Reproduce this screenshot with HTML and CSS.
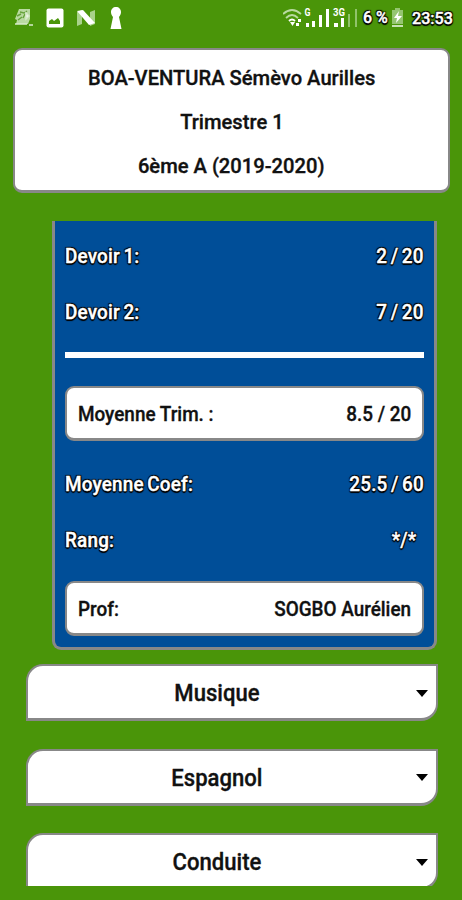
FILE: index.html
```html
<!DOCTYPE html>
<html lang="fr">
<head>
<meta charset="utf-8">
<title>Bulletin</title>
<link rel="stylesheet" href="styles.css">
</head>
<body>
<header class="status">
  <div class="notifications">
    <svg width="20" height="20" viewBox="0 0 20 20"><path d="M5 1h11v10l-2 5H2l1-4-2-1z" fill="#b9daa1"/><path d="M6 4l4 1 3-2M3 8l4-2M11 6l-2 4M4 12l4-3" stroke="#67a33b" fill="none" stroke-width="1.400"/><path d="M12 5l3 3-3 3zM1 16h12M15 17h4" fill="#fff" stroke="#d8ebca" stroke-width="1.500"/></svg>
    <svg width="18" height="20" viewBox="0 0 18 20"><rect x=".5" y=".5" width="17" height="19" rx="2" fill="#fff"/><path d="M3 16v-3l3-2 2 2 4-3 2 3v3z" fill="#4a9509"/></svg>
    <svg class="nougat" width="20" height="18" viewBox="0 0 20 18"><path d="M1 3l5-2v14l-5 2zM14 3l5-2v14l-5 2z" fill="#a9d28b"/><path d="M1 2l6-1 12 13-6 2z" fill="#fff"/></svg>
    <svg class="keyhole" width="12" height="22" viewBox="0 0 12 22"><path d="M3 10C-1 5 1.500 0 6 0s7 5 3 10L11.500 22H.5z" fill="#fff"/></svg>
  </div>
  <div class="system">
    <svg width="76" height="22" viewBox="0 0 76 22">
      <g fill="none" stroke="#b9daa1" stroke-width="1.8"><path d="M0 7q9-8 18 0M3 11q6-6 12 0"/><path d="M6 14q3-3 6 0" stroke="#fff"/></g>
      <path d="M7 15h5l-2.500 4zM15 12h3v3h-3zM13 16h3v3h-3z" fill="#fff"/>
      <path d="M23 16h3v4h-3zM29 14h3v6h-3zM36 8h3v12h-3zM43 2h3v18h-3zM51 16h4v4h-4zM58 11h3v9h-3z" fill="#fff"/>
      <path d="M65 7h2v13h-2zM72 2h2v18h-2z" fill="#91c36b"/>
      <text x="21.500" y="9" class="net" textLength="6" lengthAdjust="spacingAndGlyphs">G</text><text x="50" y="9" class="net" textLength="12" lengthAdjust="spacingAndGlyphs">3G</text>
    </svg>
    <span class="outlined percent">6 %</span>
    <svg class="battery" width="13" height="20" viewBox="0 0 13 20"><path d="M4 0h5v2h3v14H1V2h3z" fill="#95c571"/><path d="M8 3L3 10h3l-1 5 6-7H7z" fill="#fff"/><path d="M1 17h11v2H1z" fill="#c8e2b5"/></svg>
    <span class="outlined clock">23:53</span>
  </div>
</header>
<section class="student">
  <p><span>BOA-VENTURA Sémèvo Aurilles</span></p>
  <p><span>Trimestre 1</span></p>
  <p><span>6ème A (2019-2020)</span></p>
</section>
<section class="grades">
  <div class="row outlined"><span>Devoir 1:</span><span>2 / 20</span></div>
  <div class="row outlined"><span>Devoir 2:</span><span>7 / 20</span></div>
  <div class="divider"></div>
  <div class="row field"><span>Moyenne Trim. :</span><span>8.5 / 20</span></div>
  <div class="row outlined"><span>Moyenne Coef:</span><span>25.5 / 60</span></div>
  <div class="row outlined rank"><span>Rang:</span><span>*/*</span></div>
  <div class="row field"><span>Prof:</span><span>SOGBO Aurélien</span></div>
</section>
<nav class="subjects">
  <div class="subject"><span>Musique</span><i></i></div>
  <div class="subject"><span>Espagnol</span><i></i></div>
  <div class="subject"><span>Conduite</span><i></i></div>
</nav>
</body>
</html>
```
FILE: styles.css
```css
* { box-sizing: border-box; }
body {
  margin: 0;
  height: 900px;
  overflow: hidden;
  background: #4a9509;
  font: 500 21px/44px Roboto, sans-serif;
  color: #111;
  -webkit-text-stroke: .35px currentColor;
}
p { margin: 0; }
svg { display: block; flex: none; }
.status { display: flex; justify-content: space-between; height: 48px; padding: 6px 9px 0 14px; }
.notifications { display: flex; align-items: center; height: 24px; }
.notifications svg + svg { margin-left: 12px; }
.notifications .keyhole { margin-left: 14px; }
.system { display: flex; height: 24px; align-items: center; line-height: 24px; }
.net { font: bold 10px Roboto, sans-serif; fill: #fff; -webkit-text-stroke: 0; }
.outlined {
  color: #fff;
  -webkit-text-stroke: .4px #fff;
  text-shadow: 1px 1px 1px #000, -1px 1px 1px #000, 1px -1px 1px #000, -1px -1px 1px #000, 0 2px 1px #000;
}
.row.outlined { word-spacing: -1.500px; letter-spacing: .2px; }
.percent { width: 25px; margin-left: 4px; font-size: 16px; white-space: nowrap; }
.battery { margin: 0 8px 0 3px; }
.clock { font-size: 17px; width: 41px; white-space: nowrap; transform: scaleX(.95); transform-origin: left; }
.student {
  width: 437px;
  height: 145px;
  margin-left: 13px;
  padding-top: 6px;
  border: 2px solid #888;
  border-bottom-width: 3px;
  border-radius: 9px;
  background: #fff;
  text-align: center;
}
.student span { display: inline-block; transform: scaleX(.96); white-space: nowrap; }
.grades {
  width: 385px;
  height: 429px;
  margin: 28px 0 0 52px;
  padding: 7px 10px 0;
  border: solid #888;
  border-width: 0 3px 3px;
  border-radius: 0 0 9px 9px;
  background: #004e98;
}
.row {
  display: flex;
  justify-content: space-between;
  align-items: center;
  height: 56px;
  line-height: 56px;
  white-space: nowrap;
}
.row span { transform: scaleX(.9); transform-origin: left; }
.row span:last-child { transform-origin: right; }
.rank span:last-child { margin-right: 8px; }
.divider { height: 6px; margin: 12px 0 28px; background: #fff; }
.field {
  height: 55px;
  padding: 2px 11px 0;
  border: 2px solid #888;
  border-bottom-width: 3px;
  border-radius: 9px;
  background: #fff;
}
.divider + .field { margin-bottom: 15px; }
.rank + .field { margin-top: 13px; }
.subjects { width: 412px; height: 222px; margin: 14px 0 0 26px; overflow: hidden; }
.subject {
  display: flex;
  align-items: center;
  height: 57px;
  margin-bottom: 27.500px;
  padding: 2px 8px 0 0;
  border: 3px solid #888;
  border-width: 2px 2px 3px;
  border-radius: 17px 0 17px 0;
  background: #fff;
  font-size: 24px;
}
.subject span { flex: 1; padding-right: 11px; text-align: center; transform: scaleX(.92); }
.subject i { border: 6px solid transparent; border-top: 7px solid #000; border-bottom: 0; }
```
